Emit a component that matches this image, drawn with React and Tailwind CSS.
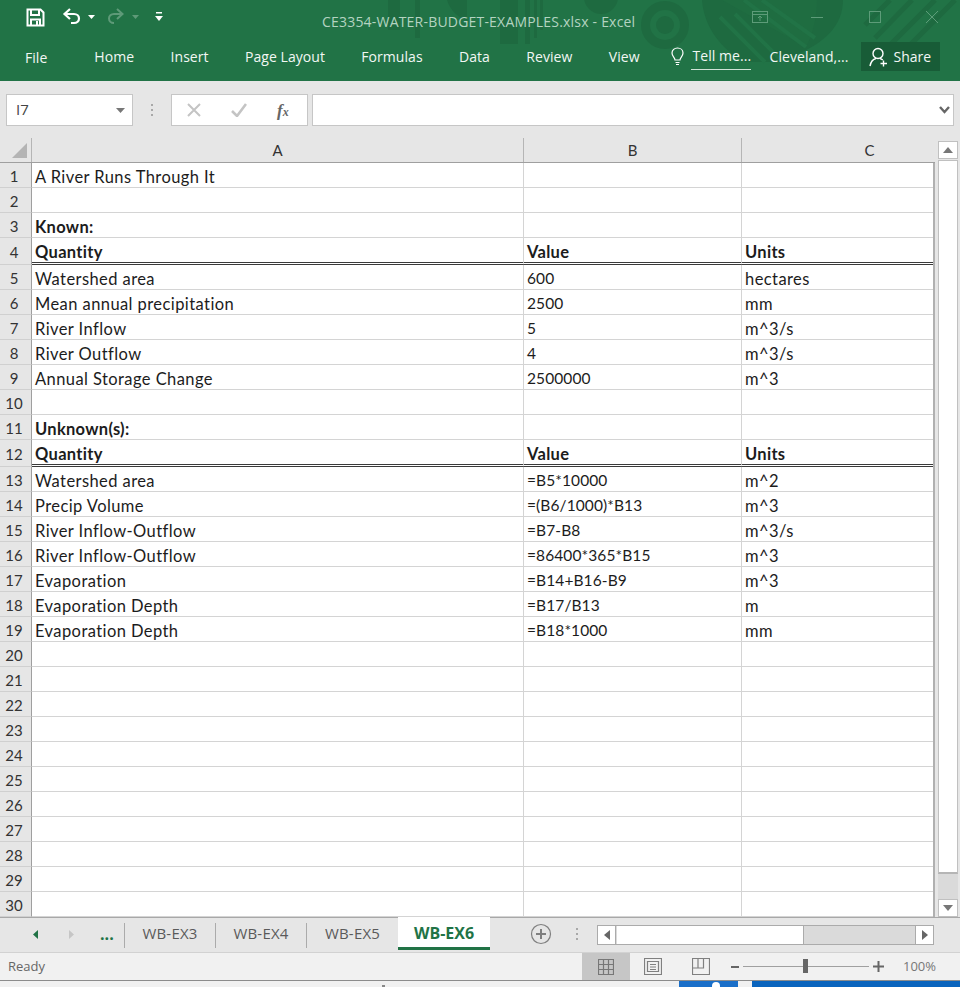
import React from 'react';

const SEG = { fontFamily: '"Open Sans", "Noto Sans", sans-serif' };
const CELL = { fontFamily: 'Lato, "Open Sans", sans-serif' };

const rows = [
  { a: 'A River Runs Through It' },
  {},
  { a: 'Known:', bold: true },
  { a: 'Quantity', b: 'Value', c: 'Units', bold: true, dbl: true },
  { a: 'Watershed area', b: '600', c: 'hectares' },
  { a: 'Mean annual precipitation', b: '2500', c: 'mm' },
  { a: 'River Inflow', b: '5', c: 'm^3/s' },
  { a: 'River Outflow', b: '4', c: 'm^3/s' },
  { a: 'Annual Storage Change', b: '2500000', c: 'm^3' },
  {},
  { a: 'Unknown(s):', bold: true },
  { a: 'Quantity', b: 'Value', c: 'Units', bold: true, dbl: true },
  { a: 'Watershed area', b: '=B5*10000', c: 'm^2' },
  { a: 'Precip Volume', b: '=(B6/1000)*B13', c: 'm^3' },
  { a: 'River Inflow-Outflow', b: '=B7-B8', c: 'm^3/s' },
  { a: 'River Inflow-Outflow', b: '=86400*365*B15', c: 'm^3' },
  { a: 'Evaporation', b: '=B14+B16-B9', c: 'm^3' },
  { a: 'Evaporation Depth', b: '=B17/B13', c: 'm' },
  { a: 'Evaporation Depth', b: '=B18*1000', c: 'mm' },
  ...Array.from({ length: 11 }, () => ({})),
];

function Cell({ w, text, bold, dbl, last, num }) {
  const type = bold
    ? 'font-bold text-[16.5px] tracking-[0.3px]'
    : num
      ? 'text-[15.5px] tracking-[0.1px]'
      : 'text-[16.5px] tracking-[0.42px]';
  return (
    <div
      className={`${w} shrink-0 flex items-center pl-[3px] pr-1 pt-[4px] overflow-hidden whitespace-nowrap text-[#1c1c1c] border-[#d4d4d4] ${type} ${last ? '' : 'border-r'} ${dbl ? 'border-b-[3px] border-b-[#3a3a3a] [border-bottom-style:double]' : 'border-b'}`}
    >
      {text}
    </div>
  );
}

function TitleArt() {
  return (
    <svg className="absolute left-0 top-0 pointer-events-none" width="960" height="81" viewBox="0 0 960 81" fill="none">
      <g fill="#1e6a40">
        <rect x="388" y="0" width="12" height="30" />
        <rect x="415" y="0" width="5" height="38" />
        <path d="M447 0H467V20C458 18 450 10 447 0Z" />
        <rect x="500" y="0" width="18" height="44" />
        <rect x="525" y="0" width="5" height="44" />
        <rect x="534" y="0" width="3" height="38" />
        <rect x="540" y="0" width="3" height="30" />
        <circle cx="601" cy="-3" r="17" />
        <circle cx="665" cy="25" r="9" />
        <path d="M702 0C704 28 722 50 745 62H770L792 56C825 44 843 25 843 0Z" />
      </g>
      <circle cx="665" cy="25" r="19.5" stroke="#1e6a40" strokeWidth="9" />
      <path d="M817 0C817 18 812 36 806 47L722 0Z" fill="#217346" opacity="0.35" />
      <path d="M720 17L765 62M735 14L783 62M744 0L806 47M762 0L815 38" stroke="#217346" strokeWidth="4" />
      <path d="M865 25L890 0M875 38L912 0M885 50L935 0M897 58L955 0" stroke="#1e6a40" strokeWidth="5" />
    </svg>
  );
}

function Dots() {
  return (
    <div className="flex flex-col gap-[3px]">
      <span className="w-[2px] h-[2px] bg-[#a8a8a8]" />
      <span className="w-[2px] h-[2px] bg-[#a8a8a8]" />
      <span className="w-[2px] h-[2px] bg-[#a8a8a8]" />
    </div>
  );
}

function SheetTab({ children, last }) {
  return (
    <div className={`w-[91px] h-[25px] pb-[3px] flex items-center justify-center border-[#ababab] text-[15px] tracking-[0.2px] text-[#5a5a5a] ${last ? '' : 'border-r'}`}>
      {children}
    </div>
  );
}

function ScrollBtn({ dir }) {
  return (
    <div className="h-[18px] shrink-0 bg-white border border-[#c0c0c0] flex items-center justify-center">
      <svg width="10" height="6" viewBox="0 0 10 6"><path d={dir === 'up' ? 'M0 6H10L5 0Z' : 'M0 0H10L5 6Z'} fill="#777" /></svg>
    </div>
  );
}

function Tri({ left }) {
  return (
    <svg width="6" height="10" viewBox="0 0 6 10"><path d={left ? 'M6 0V10L0 5Z' : 'M0 0V10L6 5Z'} fill="#666" /></svg>
  );
}

export default function App() {
  return (
    <div className="w-[960px] h-[987px] overflow-hidden bg-[#e6e6e6] flex flex-col" style={SEG}>
      {/* Title bar + ribbon tabs */}
      <header className="relative h-[81px] bg-[#217346] shrink-0 text-white overflow-hidden">
        <TitleArt />
        <div className="relative h-[34px] flex items-center">
          <div className="w-[322px] shrink-0 pl-[26px] flex items-center">
            <svg width="19" height="19" viewBox="0 0 19 19" fill="none">
              <path d="M1.5 1.5H14.5L17.5 4.5V17.5H1.5Z" stroke="#fff" strokeWidth="2" />
              <path d="M5 2V7H13V2" stroke="#fff" strokeWidth="2" />
              <path d="M5 17.5V11.5H14V17.5" stroke="#fff" strokeWidth="2" />
              <rect x="10" y="13" width="2" height="4" fill="#fff" />
            </svg>
            <div className="flex items-center gap-[6px] ml-[17px]">
              <svg width="20" height="18" viewBox="0 0 20 18" fill="none">
                <path d="M3 6H12C15 6 17 8 17 10.5C17 13 15 15 12 15H9" stroke="#fff" strokeWidth="2.2" />
                <path d="M8 1L2.5 6L8 11" stroke="#fff" strokeWidth="2.2" />
              </svg>
              <svg width="7" height="4" viewBox="0 0 7 4"><path d="M0 0H7L3.5 4Z" fill="#fff" /></svg>
            </div>
            <div className="flex items-center gap-[6px] ml-[11px] opacity-35">
              <svg width="20" height="18" viewBox="0 0 20 18" fill="none">
                <path d="M16 6H8C5 6 3 8 3 10.5C3 13 5 15 8 15" stroke="#cfe3d7" strokeWidth="2" />
                <path d="M11 1L16.5 6L11 11" stroke="#cfe3d7" strokeWidth="2" />
              </svg>
              <svg width="7" height="4" viewBox="0 0 7 4"><path d="M0 0H7L3.5 4Z" fill="#cfe3d7" /></svg>
            </div>
            <svg className="ml-[16px]" width="8" height="10" viewBox="0 0 8 10"><rect x="1" y="0" width="6" height="1.5" fill="#fff" /><path d="M0 4H8L4 9Z" fill="#fff" /></svg>
          </div>
          <div className="w-[409px] shrink-0 pt-[10px] text-[14px] leading-[20px] tracking-[0.2px] text-[#b4d3c1] whitespace-nowrap">
            CE3354-WATER-BUDGET-EXAMPLES.xlsx - Excel
          </div>
          <div className="flex items-center">
            <div className="w-[57.5px] flex justify-center">
              <svg width="20" height="16" viewBox="0 0 20 16" fill="none" stroke="#5d9c79">
                <rect x="2.5" y="2.5" width="15" height="11" />
                <path d="M2 5.5H18M10 12V7M8 9L10 7L12 9" />
              </svg>
            </div>
            <div className="w-[57.5px] flex justify-center"><div className="w-[12px] h-px bg-[#5d9c79]" /></div>
            <div className="w-[57.5px] flex justify-center"><div className="w-[12px] h-[12px] border border-[#5d9c79]" /></div>
            <div className="w-[57.5px] flex justify-center">
              <svg width="14" height="14" viewBox="0 0 14 14" stroke="#5d9c79" fill="none"><path d="M1 1L13 13M13 1L1 13" /></svg>
            </div>
          </div>
        </div>
        <nav className="relative h-[47px] pl-[25px] pb-[2px] flex items-center text-[14px] leading-[20px] tracking-[0.05px] text-[#f2f7f4] whitespace-nowrap">
          <div className="pt-[2px] mr-[47px]">File</div>
          <div className="flex items-center gap-[36.4px]">
            <span>Home</span>
            <span>Insert</span>
            <span>Page Layout</span>
            <span>Formulas</span>
            <span>Data</span>
            <span>Review</span>
            <span>View</span>
          </div>
          <svg className="ml-[31px]" width="13" height="19" viewBox="0 0 13 19" fill="none" stroke="#fff" strokeWidth="1.2">
            <path d="M4 13C4 10.5 1 9.5 1 6C1 3 3.5 1 6.5 1C9.5 1 12 3 12 6C12 9.5 9 10.5 9 13Z" />
            <path d="M4.5 15.5H8.5M5 17.5H8" />
          </svg>
          <div className="ml-[7px] w-[60px] h-[23px] mt-[3px] pl-[2px] border-b border-[#cfe3d7] leading-[18px]">Tell me...</div>
          <div className="ml-[19px]">Cleveland,...</div>
          <div className="ml-[13px] w-[79px] h-[29px] bg-[#185c37] flex items-center">
            <svg className="ml-[8px]" width="20" height="20" viewBox="0 0 20 20" fill="none" stroke="#fff" strokeWidth="1.4">
              <circle cx="9" cy="6.5" r="5" />
              <path d="M1 19C2 14 4.5 12 7 11.5M11 11.5C12 11.8 13 12.3 13.8 13" />
              <path d="M14.5 13.5V19.5M11.5 16.5H18" />
            </svg>
            <span className="ml-[4px]">Share</span>
          </div>
        </nav>
      </header>

      {/* Formula bar */}
      <div className="h-[57px] shrink-0 pt-[13px] pl-[6px] flex items-start text-[#444]">
        <div className="w-[127px] h-[32px] bg-white border border-[#c6c6c6] flex items-center justify-between pl-[9px] pr-[7px] text-[15px]">
          <span className="-mt-[1px]">I7</span>
          <svg width="9" height="5" viewBox="0 0 9 5"><path d="M0 0H9L4.5 5Z" fill="#777" /></svg>
        </div>
        <div className="w-[38px] h-[32px] flex items-center justify-center"><Dots /></div>
        <div className="w-[137px] h-[32px] bg-white border border-[#c6c6c6] flex items-center pl-[15px]">
          <svg width="14" height="14" viewBox="0 0 14 14" stroke="#c4c4c4" strokeWidth="2" fill="none"><path d="M1 1L13 13M13 1L1 13" /></svg>
          <svg className="ml-[30px]" width="16" height="14" viewBox="0 0 16 14" stroke="#c4c4c4" strokeWidth="2.6" fill="none"><path d="M1 8L6 13L15 1" /></svg>
          <span className="ml-[30px] text-[17px] leading-none italic font-bold text-[#666]" style={{ fontFamily: '"Liberation Serif", serif' }}>f<span className="text-[12px]">x</span></span>
        </div>
        <div className="ml-[4px] w-[642px] h-[32px] bg-white border border-[#c6c6c6] flex items-center justify-end pr-[3px]">
          <svg width="11" height="8" viewBox="0 0 11 8" fill="none" stroke="#666" strokeWidth="2.4"><path d="M1 1L5.5 6L10 1" /></svg>
        </div>
      </div>

      {/* Sheet */}
      <main className="flex h-[779px] shrink-0">
        <div className="w-[935px] shrink-0 flex flex-col">
          <div className="h-[25px] shrink-0 flex items-stretch border-b border-[#9f9f9f] text-[15px] text-[#333]" style={CELL}>
            <div className="w-[32px] shrink-0 border-r border-[#b5b5b5] flex items-end justify-end pr-[4px] pb-[4px]">
              <svg width="15" height="15" viewBox="0 0 15 15"><path d="M15 0V15H0Z" fill="#b4b4b4" /></svg>
            </div>
            <div className="w-[492px] shrink-0 border-r border-[#b5b5b5] flex items-center justify-center">A</div>
            <div className="w-[218px] shrink-0 border-r border-[#b5b5b5] flex items-center justify-center">B</div>
            <div className="flex-1 flex items-center justify-center pl-[62px]">C</div>
          </div>
          <div className="flex flex-col border-r-2 border-[#b0b0b0]" style={CELL}>
            {rows.map((r, i) => (
              <div key={i} className={`flex ${r.dbl ? 'h-[27px]' : 'h-[25px]'}`}>
                <div className="w-[32px] shrink-0 bg-[#e6e6e6] border-r border-[#9f9f9f] border-b border-b-[#d0d0d0] flex items-center justify-center pr-[3px] pt-[2px] text-[15px] text-[#333]">
                  {i + 1}
                </div>
                <div className="flex-1 flex bg-white min-w-0">
                  <Cell w="w-[492px]" text={r.a} bold={r.bold} dbl={r.dbl} />
                  <Cell w="w-[218px]" text={r.b} bold={r.bold} dbl={r.dbl} num />
                  <Cell w="flex-1" text={r.c} bold={r.bold} dbl={r.dbl} last />
                </div>
              </div>
            ))}
          </div>
        </div>
        {/* vertical scrollbar */}
        <div className="flex-1 pt-[3px] pl-[3px] pr-[2px] flex flex-col">
          <ScrollBtn dir="up" />
          <div className="flex-1 mt-[1px] bg-[#dadada] flex flex-col">
            <div className="h-[714px] bg-white border border-[#c0c0c0] border-b-2 border-b-[#b5b5b5]" />
          </div>
          <ScrollBtn dir="down" />
        </div>
      </main>

      {/* Sheet tabs */}
      <div className="h-[36px] shrink-0 bg-[#e6e6e6] border-b border-[#d2d2d2] border-t border-t-[#a8a8a8] pl-[33px] flex items-center">
        <svg className="-mt-[2px]" width="5" height="9" viewBox="0 0 5 9"><path d="M5 0V9L0 4.5Z" fill="#217346" /></svg>
        <svg className="ml-[31px] -mt-[2px]" width="5" height="9" viewBox="0 0 5 9"><path d="M0 0V9L5 4.5Z" fill="#c6c6c6" /></svg>
        <div className="ml-[26px] w-[24px] -mt-[2px] text-[16px] font-bold text-[#217346] leading-[24px]">...</div>
        <div className="flex border-l border-[#ababab]">
          <SheetTab>WB-EX3</SheetTab>
          <SheetTab>WB-EX4</SheetTab>
          <SheetTab last>WB-EX5</SheetTab>
        </div>
        <div className="self-start -mt-[1px] w-[92px] h-[33px] pt-[1px] bg-white border-b-[3px] border-[#217346] flex items-center justify-center text-[16px] font-bold text-[#217346]">
          WB-EX6
        </div>
        <svg className="ml-[40px] -mt-[2px]" width="22" height="22" viewBox="0 0 22 22" fill="none" stroke="#7f7f7f">
          <circle cx="11" cy="11" r="9.5" strokeWidth="1.2" />
          <path d="M6 11H16M11 6V16" strokeWidth="2" />
        </svg>
        <div className="ml-[24px] -mt-[2px]"><Dots /></div>
        <div className="ml-[19px] w-[337px] h-[20px] bg-[#dadada] border border-[#ababab] flex">
          <div className="w-[18px] bg-white border-r border-[#ababab] flex items-center justify-center"><Tri left /></div>
          <div className="w-[187px] bg-white border-r border-[#ababab] ml-[1px]" />
          <div className="flex-1" />
          <div className="w-[18px] bg-white border-l border-[#ababab] flex items-center justify-center"><Tri /></div>
        </div>
      </div>

      {/* Status bar */}
      <div className="h-[27px] shrink-0 bg-[#f1f1f1] flex items-center text-[13px] text-[#666] pl-[8px] pr-[24px]">
        <span>Ready</span>
        <div className="ml-auto w-[48px] h-[27px] bg-[#c6c6c6] flex items-center justify-center">
          <svg width="16" height="16" viewBox="0 0 16 16" fill="none" stroke="#777" strokeWidth="1.2"><path d="M.5.5H15.5V15.5H.5ZM.5 5.5H15.5M.5 10.5H15.5M5.5.5V15.5M10.5.5V15.5" /></svg>
        </div>
        <svg className="ml-[14px]" width="18" height="17" viewBox="0 0 18 17" fill="none" stroke="#808080" strokeWidth="1.2"><path d="M.5.5H17.5V16.5H.5Z" /><path d="M3.5 3.5H14.5V13.5H3.5ZM6 6.5H12M6 9H12M6 11.5H12" /></svg>
        <svg className="ml-[30px]" width="18" height="17" viewBox="0 0 18 17" fill="none" stroke="#808080" strokeWidth="1.2"><path d="M.5.5H17.5V16.5H.5ZM.5 10H11.5V.5M6 .5V10" /></svg>
        <div className="ml-[21px] w-[8px] h-[2px] bg-[#666]" />
        <div className="relative ml-[4px] w-[126px] h-px bg-[#a0a0a0]">
          <div className="absolute left-[60px] -top-[7px] w-[5px] h-[14px] bg-[#666]" />
        </div>
        <svg className="ml-[4px]" width="11" height="11" viewBox="0 0 11 11"><path d="M0 5.5H11M5.5 0V11" stroke="#666" strokeWidth="2" /></svg>
        <span className="ml-[19px] text-[#777]">100%</span>
      </div>

      {/* Taskbar sliver */}
      <div className="h-[7px] shrink-0 bg-[#f1f1f1] border-t border-[#8c8c8c] flex">
        <div className="ml-[382px] mt-[4px] w-[3px] h-[2px] bg-[#888]" />
        <div className="relative ml-[294px] w-[59px] bg-[#1a6fc9] overflow-hidden">
          <div className="absolute left-[33px] top-[1px] w-[8px] h-[8px] rounded-full bg-white" />
        </div>
        <div className="ml-[14px] flex-1 bg-[#0a64bd]" />
      </div>
    </div>
  );
}
